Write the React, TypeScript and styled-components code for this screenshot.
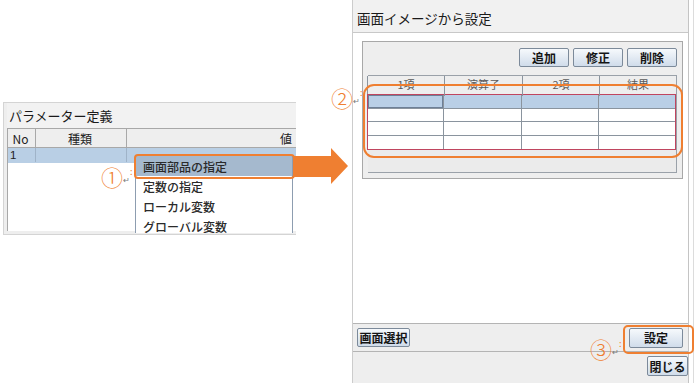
import React from "react";
import styled, { createGlobalStyle } from "styled-components";

const ORANGE = "#ef7f31";
const JP = `"Noto Sans CJK JP", "Noto Sans", sans-serif`;

const Global = createGlobalStyle`
  html, body { margin: 0; padding: 0; background: #ffffff; }
  body { font-family: ${JP}; }
  * { box-sizing: border-box; }
`;

const Canvas = styled.div`
  position: relative;
  width: 696px;
  height: 385px;
  overflow: hidden;
  background: #ffffff;
  display: flex;
  align-items: flex-start;
`;

/* ---------- left screenshot ---------- */
const LeftPanel = styled.div`
  position: relative;
  margin: 102px 0 0 3px;
  width: 293px;
  height: 133px;
  overflow: hidden;
  background: #eeeeee;
  border: 1px solid #d4d4d4;
  border-right: none;
  padding: 0 0 3px 3px;
  display: flex;
  flex-direction: column;
`;

const PanelTitle = styled.div`
  height: 25px;
  display: flex;
  align-items: center;
  padding-left: 2px;
  font-size: 13px;
  color: #1a1a1a;
  background: #f2f2f2;
`;

const ParamTable = styled.div`
  flex: 1;
  background: #ffffff;
  border-left: 1px solid #a8a8a8;
  border-top: 1px solid #a8a8a8;
  display: flex;
  flex-direction: column;
`;

const ParamRow = styled.div<{ $head?: boolean }>`
  display: grid;
  grid-template-columns: 28px 91px 1fr;
  height: ${(p) => (p.$head ? "19px" : "15px")};
  background: ${(p) => (p.$head ? "#eeeeee" : "#b9cfe5")};
  border-bottom: 1px solid ${(p) => (p.$head ? "#a8a8a8" : "#b9cfe5")};
`;

const ParamCell = styled.div<{ $align?: string; $head?: boolean }>`
  display: flex;
  align-items: center;
  justify-content: ${(p) => p.$align || "center"};
  padding: 0 4px 0 2px;
  font-size: ${(p) => (p.$head ? "12px" : "11.5px")};
  font-family: ${(p) => (p.$head ? JP : `"Liberation Sans", ${JP}`)};
  color: #222;
  border-right: 1px solid ${(p) => (p.$head ? "#a8a8a8" : "#9fb3c8")};
  &:last-child { border-right: none; }
`;

const Menu = styled.div`
  position: absolute;
  left: 131px;
  top: 52px;
  width: 158px;
  height: 78px;
  overflow: hidden;
  background: #ffffff;
  border: 1px solid #8d9db0;
  border-bottom: none;
`;

const MenuItem = styled.div<{ $active?: boolean }>`
  height: 20px;
  display: flex;
  align-items: center;
  padding-left: 7px;
  font-size: 12px;
  font-weight: 500;
  color: #2a2a2a;
  background: ${(p) => (p.$active ? "#a5b9ce" : "#ffffff")};
`;

/* ---------- right screenshot ---------- */
const Dialog = styled.div`
  margin-left: 56px;
  width: 337px;
  height: 383px;
  background: #ffffff;
  border-left: 1px solid #cccccc;
  border-right: 1px solid #c4c4c4;
  display: flex;
  flex-direction: column;
`;

const EdgeLine = styled.div`
  margin-left: 4px;
  width: 1px;
  height: 383px;
  background: #dcdcdc;
`;

const DialogTitle = styled.div`
  height: 33px;
  flex: none;
  display: flex;
  align-items: center;
  padding: 3px 0 0 4px;
  font-size: 13.5px;
  color: #1a1a1a;
  background: #f1f1f1;
  border-bottom: 1px solid #c8c8c8;
`;

const DialogBody = styled.div`
  flex: 1;
  padding: 8px 5px 0 9px;
`;

const GroupBox = styled.div`
  height: 138px;
  background: #eeeeee;
  border: 1px solid #a8a8a8;
  padding: 6px 5px 5px 4px;
  display: flex;
  flex-direction: column;
`;

const ButtonRow = styled.div`
  display: flex;
  justify-content: flex-end;
  gap: 4px;
`;

const Btn = styled.div<{ $w: number; $h?: number }>`
  width: ${(p) => p.$w}px;
  height: ${(p) => p.$h || 19}px;
  display: flex;
  align-items: center;
  justify-content: center;
  font-size: 12px;
  font-weight: 700;
  color: #151515;
  background: linear-gradient(#f6f9fc, #d0dcea);
  border: 1px solid #7c8a9a;
  border-radius: 2px;
`;

const CalcWrap = styled.div`
  flex: 1;
  margin-top: 8px;
  margin-left: 1px;
  border: 1px solid #9aa1a9;
  border-left: none;
  background: #ebebeb;
`;

const CalcHead = styled.div`
  display: grid;
  grid-template-columns: 77px 78px 77px 1fr;
  height: 18px;
  margin-left: -1px;
  background: #eeeeee;
  border-left: 1px solid #8a949e;
`;

const HeadCell = styled.div`
  display: flex;
  align-items: center;
  justify-content: center;
  padding-bottom: 4px;
  font-size: 11px;
  color: #5a5a5a;
  border-right: 1px solid #8a949e;
  &:last-child { border-right: none; }
`;

const CalcBody = styled.div`
  margin-left: -1px;
  border: 1px solid #c0455f;
  background: #ffffff;
`;

const CalcRow = styled.div<{ $sel?: boolean }>`
  display: grid;
  grid-template-columns: 76px 78px 77px 1fr;
  height: 13.5px;
  background: ${(p) => (p.$sel ? "#b9cfe6" : "#ffffff")};
  border-bottom: 1px solid #8a949e;
  &:last-child { border-bottom: none; }
`;

const CalcCell = styled.div<{ $focus?: boolean }>`
  border-right: 1px solid #8a949e;
  box-shadow: ${(p) => (p.$focus ? "inset 0 0 0 1px #6d7f96" : "none")};
  &:last-child { border-right: none; }
`;

const Spacer = styled.div`
  flex: 1;
  background: #ffffff;
`;

const BottomBar = styled.div`
  height: 29px;
  flex: none;
  display: flex;
  align-items: center;
  justify-content: space-between;
  padding: 0 5px 0 4px;
  background: #eeeeee;
  border-top: 1px solid #b4b4b4;
  border-bottom: 1px solid #b4b4b4;
`;

const Footer = styled.div`
  height: 31px;
  flex: none;
  display: flex;
  align-items: center;
  justify-content: flex-end;
  padding: 0 0 3px 0;
  background: #eeeeee;
`;

/* ---------- annotations (overlay) ---------- */
const Highlight = styled.div<{ $x: number; $y: number; $w: number; $h: number; $r: number }>`
  position: absolute;
  left: ${(p) => p.$x}px;
  top: ${(p) => p.$y}px;
  width: ${(p) => p.$w}px;
  height: ${(p) => p.$h}px;
  border: 2.5px solid ${ORANGE};
  border-radius: ${(p) => p.$r}px;
  pointer-events: none;
`;

const Callout = styled.div<{ $x: number; $y: number }>`
  position: absolute;
  left: ${(p) => p.$x}px;
  top: ${(p) => p.$y}px;
  display: flex;
  align-items: flex-end;
  font-family: ${JP};
  line-height: 1;
`;

const CircledNum = styled.span`
  font-size: 22px;
  font-weight: 300;
  color: ${ORANGE};
`;

const ReturnMark = styled.span`
  font-size: 8px;
  color: #777;
  margin-left: 0;
  margin-bottom: 3px;
`;

const Dots = styled.span`
  font-size: 9px;
  color: ${ORANGE};
  margin-bottom: 11px;
`;

const ArrowSvg = styled.svg`
  position: absolute;
  left: 293px;
  top: 147px;
`;

const Mark = ({ x, y, n }: { x: number; y: number; n: string }) => (
  <Callout $x={x} $y={y}>
    <CircledNum>{n}</CircledNum>
    <ReturnMark>↵</ReturnMark>
    <Dots>:</Dots>
  </Callout>
);

export default function App() {
  return (
    <>
      <Global />
      <Canvas>
        <LeftPanel>
          <PanelTitle>パラメーター定義</PanelTitle>
          <ParamTable>
            <ParamRow $head>
              <ParamCell $head>No</ParamCell>
              <ParamCell $head>種類</ParamCell>
              <ParamCell $head $align="flex-end">値</ParamCell>
            </ParamRow>
            <ParamRow>
              <ParamCell $align="flex-start">1</ParamCell>
              <ParamCell />
              <ParamCell />
            </ParamRow>
          </ParamTable>
          <Menu>
            <MenuItem $active>画面部品の指定</MenuItem>
            <MenuItem>定数の指定</MenuItem>
            <MenuItem>ローカル変数</MenuItem>
            <MenuItem>グローバル変数</MenuItem>
          </Menu>
        </LeftPanel>

        <Dialog>
          <DialogTitle>画面イメージから設定</DialogTitle>
          <DialogBody>
            <GroupBox>
              <ButtonRow>
                <Btn $w={50}>追加</Btn>
                <Btn $w={50}>修正</Btn>
                <Btn $w={50}>削除</Btn>
              </ButtonRow>
              <CalcWrap>
                <CalcHead>
                  <HeadCell>1項</HeadCell>
                  <HeadCell>演算子</HeadCell>
                  <HeadCell>2項</HeadCell>
                  <HeadCell>結果</HeadCell>
                </CalcHead>
                <CalcBody>
                  {[0, 1, 2, 3].map((r) => (
                    <CalcRow key={r} $sel={r === 0}>
                      {[0, 1, 2, 3].map((c) => (
                        <CalcCell key={c} $focus={r === 0 && c === 0} />
                      ))}
                    </CalcRow>
                  ))}
                </CalcBody>
              </CalcWrap>
            </GroupBox>
          </DialogBody>
          <Spacer />
          <BottomBar>
            <Btn $w={53}>画面選択</Btn>
            <Btn $w={54} $h={20}>設定</Btn>
          </BottomBar>
          <Footer>
            <Btn $w={41} $h={20}>閉じる</Btn>
          </Footer>
        </Dialog>
        <EdgeLine />

        <ArrowSvg width="56" height="38" viewBox="0 0 56 38">
          <polygon points="0,9 38,9 38,1 55,19 38,37 38,30 0,30" fill={ORANGE} />
        </ArrowSvg>

        <Highlight $x={134} $y={154} $w={161} $h={25} $r={4} />
        <Highlight $x={363} $y={84} $w={320} $h={74} $r={11} />
        <Highlight $x={623} $y={325} $w={71} $h={29} $r={5} />

        <Mark x={101} y={165} n="①" />
        <Mark x={331} y={86} n="②" />
        <Mark x={590} y={337} n="③" />
      </Canvas>
    </>
  );
}
